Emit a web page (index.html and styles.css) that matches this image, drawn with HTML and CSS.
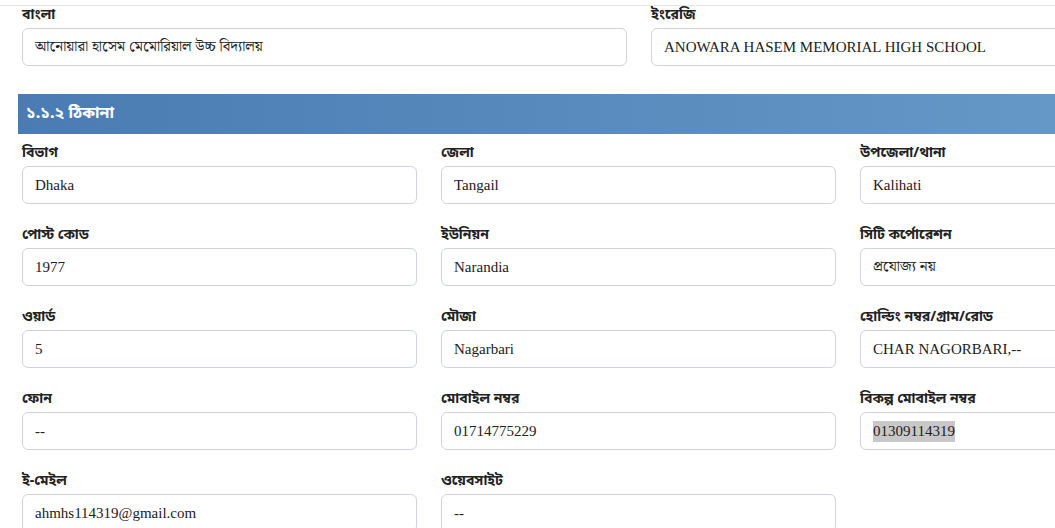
FILE: index.html
```html
<!DOCTYPE html>
<html lang="bn">
<head>
  <meta charset="UTF-8" />
  <meta name="viewport" content="width=device-width, initial-scale=1.0"/>
  <title>প্রতিষ্ঠানের তথ্য</title>
  <link rel="stylesheet" href="styles.css">
</head>
<body>
  <div class="page">
    <div class="grid grid-2">
      <div class="field">
        <label>বাংলা</label>
        <div class="input">আনোয়ারা হাসেম মেমোরিয়াল উচ্চ বিদ্যালয়</div>
      </div>
      <div class="field">
        <label>ইংরেজি</label>
        <div class="input">ANOWARA HASEM MEMORIAL HIGH SCHOOL</div>
      </div>
    </div>

    <h3 class="section-title">১.১.২ ঠিকানা</h3>

    <div class="grid grid-3">
      <div class="field">
        <label>বিভাগ</label>
        <div class="input">Dhaka</div>
      </div>
      <div class="field">
        <label>জেলা</label>
        <div class="input">Tangail</div>
      </div>
      <div class="field">
        <label>উপজেলা/থানা</label>
        <div class="input">Kalihati</div>
      </div>

      <div class="field">
        <label>পোস্ট কোড</label>
        <div class="input">1977</div>
      </div>
      <div class="field">
        <label>ইউনিয়ন</label>
        <div class="input">Narandia</div>
      </div>
      <div class="field">
        <label>সিটি কর্পোরেশন</label>
        <div class="input">প্রযোজ্য নয়</div>
      </div>

      <div class="field">
        <label>ওয়ার্ড</label>
        <div class="input">5</div>
      </div>
      <div class="field">
        <label>মৌজা</label>
        <div class="input">Nagarbari</div>
      </div>
      <div class="field">
        <label>হোল্ডিং নম্বর/গ্রাম/রোড</label>
        <div class="input">CHAR NAGORBARI,--</div>
      </div>

      <div class="field">
        <label>ফোন</label>
        <div class="input">--</div>
      </div>
      <div class="field">
        <label>মোবাইল নম্বর</label>
        <div class="input">01714775229</div>
      </div>
      <div class="field">
        <label>বিকল্প মোবাইল নম্বর</label>
        <div class="input"><span class="selected">01309114319</span></div>
      </div>

      <div class="field">
        <label>ই-মেইল</label>
        <div class="input">ahmhs114319@gmail.com</div>
      </div>
      <div class="field">
        <label>ওয়েবসাইট</label>
        <div class="input">--</div>
      </div>
    </div>
  </div>
</body>
</html>
```

FILE: styles.css
```css
* {
  margin: 0;
  padding: 0;
  box-sizing: border-box;
}

html, body {
  overflow: hidden;
}

body {
  background: #fff;
  color: #222;
  font-family: 'Liberation Serif', 'Noto Serif Bengali', 'Noto Sans Bengali', 'Lohit Bengali', serif;
  padding-top: 5px;
}

.page {
  border-top: 1px solid #e3e3e3;
  padding-left: 18px;
}

.grid {
  display: grid;
  column-gap: 24px;
  row-gap: 22px;
  padding-left: 4px;
}

.grid-2 {
  grid-template-columns: repeat(2, 605px);
}

.grid-3 {
  grid-template-columns: repeat(3, 395px);
}

.field label {
  display: block;
  font-family: 'Noto Sans Bengali', 'Noto Serif Bengali', 'Lohit Bengali', 'Liberation Sans', sans-serif;
  font-size: 14px;
  font-weight: 700;
  line-height: 20px;
  height: 20px;
  margin-bottom: 2px;
  color: #222;
  white-space: nowrap;
}

.input {
  height: 38px;
  border: 1px solid #ced4da;
  border-radius: 6px;
  padding: 0 12px;
  display: flex;
  align-items: center;
  font-size: 15px;
  color: #212121;
  white-space: nowrap;
  overflow: hidden;
}

.selected {
  background: #c8c8c8;
  padding: 2px 0;
}

.section-title {
  margin-top: 28px;
  margin-bottom: 10px;
  height: 40px;
  display: flex;
  align-items: center;
  padding-left: 8px;
  background: linear-gradient(90deg, #4a7cb3, #6597c7);
  color: #fff;
  font-family: 'Noto Sans Bengali', 'Noto Serif Bengali', 'Lohit Bengali', 'Liberation Sans', sans-serif;
  font-size: 16px;
  font-weight: 700;
}
```
